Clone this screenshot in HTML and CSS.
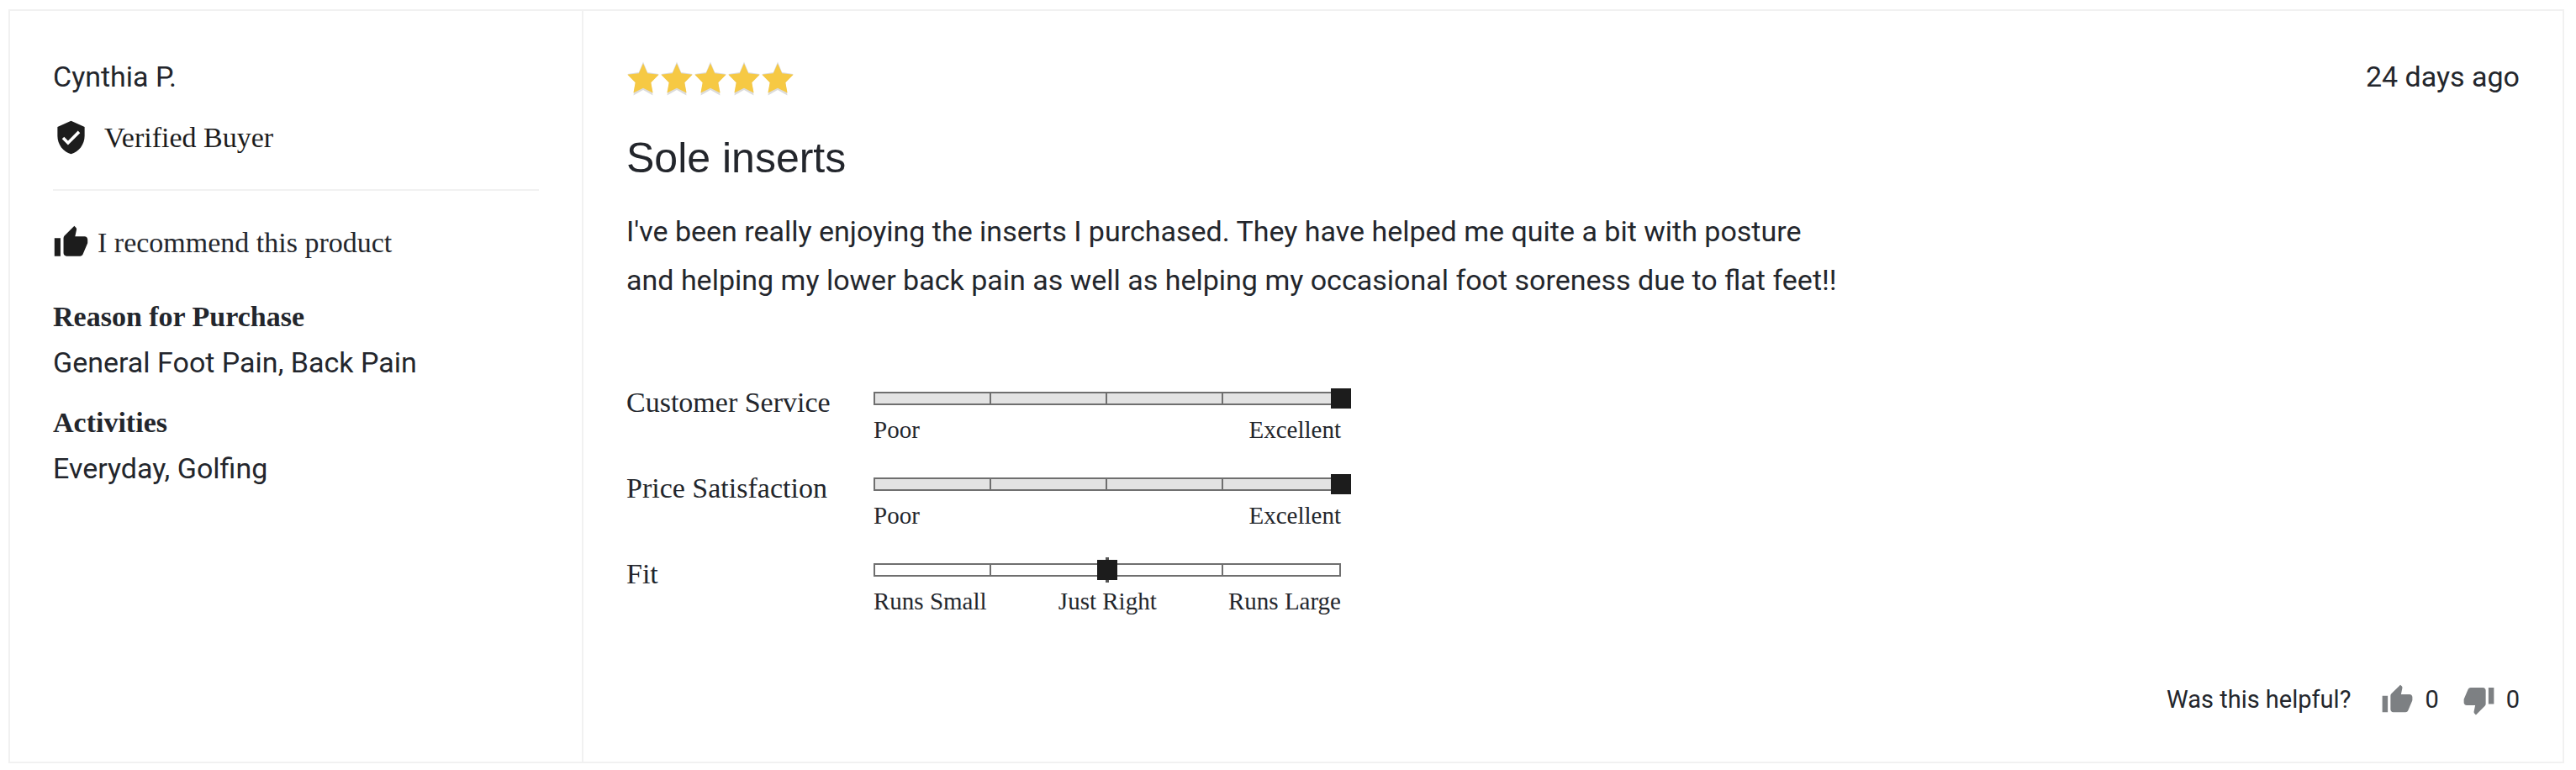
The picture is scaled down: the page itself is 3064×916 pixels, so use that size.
FILE: index.html
```html
<!DOCTYPE html>
<html lang="en">
<head>
<meta charset="utf-8">
<title>Customer review</title>
<link rel="stylesheet" href="styles.css">
</head>
<body>
<svg class="defs" aria-hidden="true">
  <symbol id="thumb" viewBox="0 0 24 24"><path d="M1 21h4V9H1v12zm22-11c0-1.100-.9-2-2-2h-6.310l.95-4.570.03-.32c0-.41-.17-.79-.44-1.060L14.170 1 7.590 7.590C7.220 7.950 7 8.450 7 9v10c0 1.100.9 2 2 2h9c.83 0 1.540-.5 1.840-1.220l3.020-7.050c.09-.23.14-.47.14-.73v-2z"/></symbol>
  <symbol id="star" viewBox="0 0 40 42"><path class="star-base" d="M20 1.500L25.200 14l13.300 2-9.200 10 2.200 15.500L20 35 8.500 41.500 10.700 26 1.500 16l13.300-2z"/><path d="M20 3.500l5.200 11.800 13.500 1.500-9.400 9.500 2.300 12.300L20 32.700 8.400 38.600l2.300-12.300L1.300 16.800l13.500-1.500z"/></symbol>
</svg>
<article class="review">
  <aside class="reviewer">
    <div class="name">Cynthia P.</div>
    <div class="verified">
      <svg class="icon" viewBox="0 0 24 24" aria-hidden="true"><path d="M12 1L3 5v6c0 5.550 3.840 10.740 9 12 5.160-1.260 9-6.450 9-12V5l-9-4zm-2 16l-4-4 1.410-1.410L10 14.170l6.590-6.590L18 9l-8 8z"/></svg>
      <span>Verified Buyer</span>
    </div>
    <div class="recommend">
      <svg class="icon" aria-hidden="true"><use href="#thumb"/></svg>
      <span>I recommend this product</span>
    </div>
    <dl class="facts">
      <dt>Reason for Purchase</dt>
      <dd>General Foot Pain, Back Pain</dd>
      <dt>Activities</dt>
      <dd>Everyday, Golfing</dd>
    </dl>
  </aside>
  <section class="content">
    <header class="top">
      <div class="stars" role="img" aria-label="Rated 5 out of 5 stars">
        <svg><use href="#star"/></svg><svg><use href="#star"/></svg><svg><use href="#star"/></svg><svg><use href="#star"/></svg><svg><use href="#star"/></svg>
      </div>
      <time class="date">24 days ago</time>
    </header>
    <h3 class="title">Sole inserts</h3>
    <p class="body">I've been really enjoying the inserts I purchased. They have helped me quite a bit with posture and helping my lower back pain as well as helping my occasional foot soreness due to flat feet!!</p>
    <div class="ratings">
      <div class="label">Customer Service</div>
      <div class="scale">
        <div class="track filled" role="img" aria-label="Customer Service rated 5 out of 5"><i></i><i></i><i></i><i></i><b class="marker end"></b></div>
        <div class="ends"><span>Poor</span><span>Excellent</span></div>
      </div>
      <div class="label">Price Satisfaction</div>
      <div class="scale">
        <div class="track filled" role="img" aria-label="Price Satisfaction rated 5 out of 5"><i></i><i></i><i></i><i></i><b class="marker end"></b></div>
        <div class="ends"><span>Poor</span><span>Excellent</span></div>
      </div>
      <div class="label">Fit</div>
      <div class="scale">
        <div class="track" role="img" aria-label="Fit rated just right"><i></i><i></i><i></i><i></i><b class="tick"></b><b class="marker middle"></b></div>
        <div class="ends"><span>Runs Small</span><span>Just Right</span><span>Runs Large</span></div>
      </div>
    </div>
    <footer class="helpful">
      <span>Was this helpful?</span>
      <button class="vote" type="button" aria-label="Helpful, 0 votes"><svg aria-hidden="true"><use href="#thumb"/></svg>0</button>
      <button class="vote down" type="button" aria-label="Not helpful, 0 votes"><svg aria-hidden="true"><use href="#thumb"/></svg>0</button>
    </footer>
  </section>
</article>
</body>
</html>
```
FILE: styles.css
```css
* { box-sizing: border-box; }

body {
  margin: 0;
  padding: 11px 14px 9px 10px;
  background: #fff;
  color: #23262c;
  font: 34px/40px Roboto, sans-serif;
}

.defs { display: none; }

.review {
  display: grid;
  grid-template-columns: 682px 1fr;
  border: 2px solid #f1f1f1;
}

.reviewer {
  padding: 58px 51px;
  border-right: 2px solid #f1f1f1;
}

.verified,
.recommend {
  display: flex;
  align-items: center;
  font-family: "Liberation Serif", serif;
}

.verified {
  gap: 18px;
  margin-top: 31px;
  padding-bottom: 40px;
  border-bottom: 2px solid #f1f1f1;
  color: #1c1c1c;
}

.recommend {
  gap: 10px;
  margin-top: 40px;
}

.icon {
  width: 43px;
  height: 43px;
  fill: #1c1c1c;
}

.facts { margin: 47px 0 0; }

.facts dt {
  font-family: "Liberation Serif", serif;
  font-weight: 700;
}

.facts dd { margin: 14px 0 32px; }

.content {
  display: flex;
  flex-direction: column;
  padding: 58px 51px 54px;
}

.top {
  display: flex;
  justify-content: space-between;
}

.stars {
  display: flex;
  padding-top: 1px;
}

.stars svg {
  width: 40px;
  height: 42px;
  fill: #f6c944;
}

.star-base { fill: #dcdcdc; }

.title {
  margin: 44px 0 0;
  font: 400 50px/60px "Liberation Sans", sans-serif;
}

.body {
  max-width: 1460px;
  margin: 28px 0 0;
  line-height: 58px;
}

.ratings {
  display: grid;
  grid-template-columns: 294px 556px;
  row-gap: 32px;
  margin-top: 96px;
  font-family: "Liberation Serif", serif;
}

.label { padding-top: 1px; }

.scale { padding-top: 8px; }

.track {
  position: relative;
  display: grid;
  grid-template-columns: repeat(4, 1fr);
  height: 16px;
  border: 2px solid #6f6f6f;
}

.track i { border-right: 2px solid #6f6f6f; }

.track i:nth-child(4) { border-right: 0; }

.filled { background: #e3e3e3; }

.marker {
  position: absolute;
  top: -6px;
  width: 24px;
  height: 24px;
  background: #1c1c1c;
}

.end { right: -14px; }

.middle {
  left: 50%;
  margin-left: -12px;
}

.tick {
  position: absolute;
  top: -9px;
  left: 50%;
  width: 4px;
  height: 30px;
  margin-left: -2px;
  background: #555;
}

.ends {
  display: flex;
  justify-content: space-between;
  margin-top: 12px;
  font-size: 29px;
  line-height: 34px;
}

.helpful {
  display: flex;
  justify-content: flex-end;
  align-items: center;
  margin-top: 80px;
  font-size: 29px;
}

.vote {
  display: flex;
  align-items: center;
  gap: 13px;
  margin-left: 36px;
  padding: 0;
  border: 0;
  background: none;
  color: inherit;
  font: inherit;
  cursor: pointer;
}

.vote svg {
  width: 39px;
  height: 39px;
  fill: #7d8083;
}

.down { margin-left: 28px; }

.down svg { transform: rotate(180deg); }
```
